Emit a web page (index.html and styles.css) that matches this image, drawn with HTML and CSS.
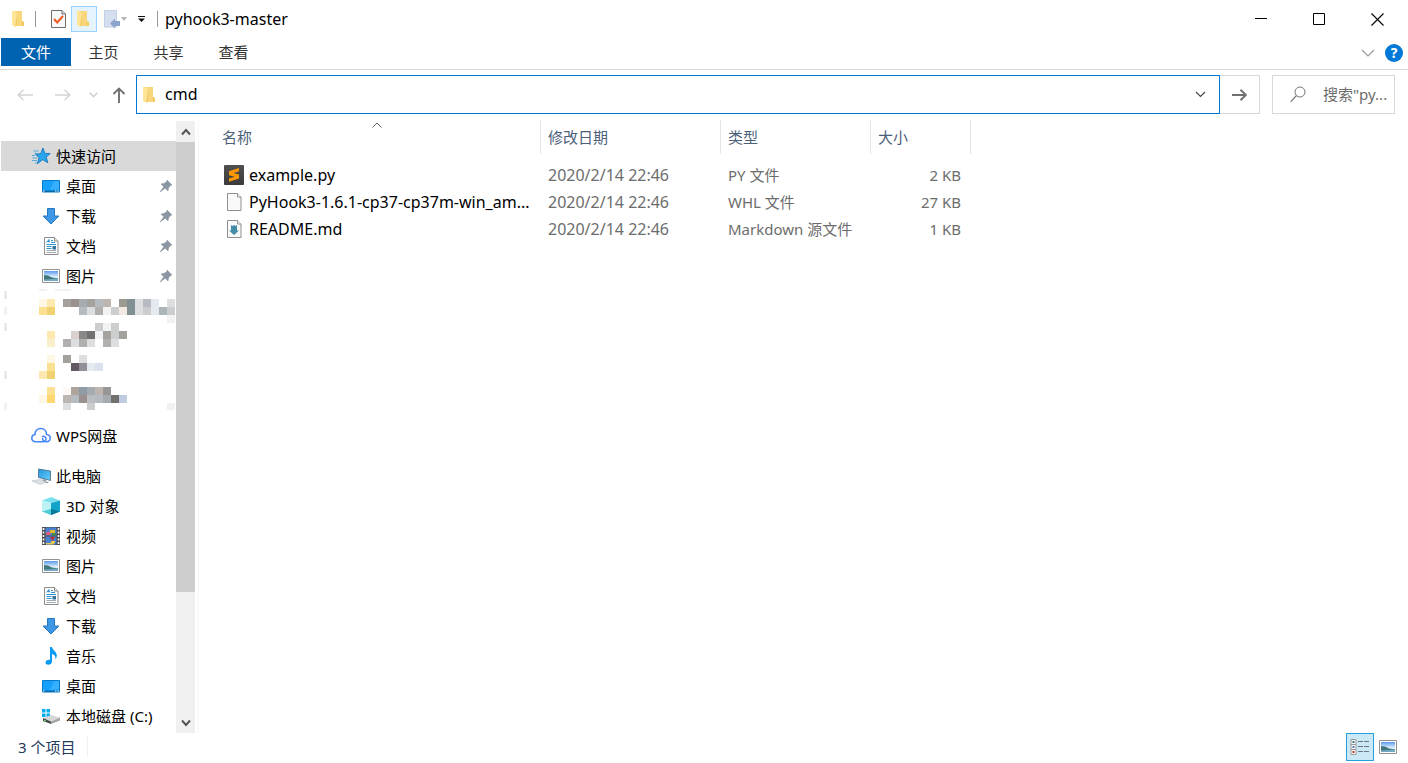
FILE: index.html
```html
<!DOCTYPE html>
<html lang="zh-CN">
<head>
<meta charset="utf-8">
<title>pyhook3-master</title>
<link rel="stylesheet" href="styles.css">
</head>
<body>
<svg class="sprite" width="0" height="0" aria-hidden="true">
  <defs>
    <linearGradient id="g-sky" x1="0" y1="0" x2="0" y2="1"><stop offset="0" stop-color="#5b9bef"/><stop offset=".6" stop-color="#e4f1fb"/><stop offset="1" stop-color="#cfe6f5"/></linearGradient>
    <linearGradient id="g-screen" x1="0" y1="0" x2="1" y2="1"><stop offset="0" stop-color="#1f97e0"/><stop offset="1" stop-color="#6ccbfa"/></linearGradient>
    <linearGradient id="g-dark" x1="0" y1="0" x2="0" y2="1"><stop offset="0" stop-color="#505050"/><stop offset="1" stop-color="#3a3a3a"/></linearGradient>
  </defs>
  <symbol id="i-folder" viewBox="0 0 20 20">
    <path d="M3 2h10v10l2 1v4H6z" fill="#f8d67c"/>
    <path d="M13 12l2 1v4h-2z" fill="#f3c95f"/>
    <path d="M3 2h2l3 2.500V16l-1.500 2L3 16z" fill="#ffe596"/>
    <path d="M8 4.500V16l-1.500 2v-3z" fill="#eec866"/>
  </symbol>
  <symbol id="i-star" viewBox="0 0 20 20">
    <path d="M12 2l1.800 5.400 5.400.1-4 3.700 1.700 5.500-5.300-3-5.200 4 1.700-6-3.700-3.600 5.200-.4z" fill="#2ba4ee" stroke="#1478bd" stroke-width=".9"/>
    <path d="M2.500 5h5M3.500 7.200h2M1 9.500h3M1.500 12h5M1 14.500h5M4 17h2" stroke="#4aa6dd" stroke-width=".9"/>
  </symbol>
  <symbol id="i-desktop" viewBox="0 0 20 20">
    <path d="M1.500 4.500h17v11.500h-17z" fill="#14a0fb" stroke="#0a79c8"/>
    <path d="M13 5h5v8l-9 1z" fill="#45b6ff" opacity=".7"/>
    <path d="M2 14.500h16v1.500H2z" fill="#0869ad"/>
    <path d="M2 15h1.500M14 15h1.500M16.500 15H18" stroke="#fff"/>
  </symbol>
  <symbol id="i-download" viewBox="0 0 20 20"><path d="M6.500 2.500h7V10H18l-8 8-8-8h4.500z" fill="#3d97e4" stroke="#2878bd"/></symbol>
  <symbol id="i-doc" viewBox="0 0 20 20">
    <path d="M3.500 1.500h10l3.500 3.500v13.500H3.500z" fill="#fff" stroke="#8c8c8c"/>
    <path d="M13.500 1.500V5H17" fill="#eee" stroke="#8c8c8c"/>
    <path d="M5.500 6.500L8 3.500v3M6.500 5.500h2" stroke="#2485c9" fill="none"/>
    <path d="M10 4.500h2M10 6.500h4M5.500 8.500h9.500M5.500 10.500h5M5.500 12.500h5" stroke="#2f94d3"/>
    <path d="M5.500 14.500h9.500M5.500 16.500h9.500" stroke="#a5abb0"/>
    <path d="M11.500 10h3.500v3.500h-3.500z" fill="#31739d"/>
  </symbol>
  <symbol id="i-picture" viewBox="0 0 20 20">
    <path d="M1.500 3.500h17v13h-17z" fill="#fff" stroke="#929292"/>
    <path d="M3 5h14v10H3z" fill="url(#g-sky)"/>
    <path d="M3 9l4 .5 4 2 6 .8V15H3z" fill="#42787a"/>
    <path d="M3 13.500l8-.6 6-.6V15H3z" fill="#75a9c4"/>
  </symbol>
  <symbol id="i-pin" viewBox="0 0 16 16">
    <path d="M9 2l5 5-1.500.5L10.500 10l-.5 3-2.800-2.800L2 14l3.800-5.200L3 6l3-.5L9 3.500z" fill="#8a97a3" stroke="#8a97a3" stroke-width=".6"/>
  </symbol>
  <symbol id="i-cloud" viewBox="0 0 20 20">
    <path d="M15.500 8.500c2.400.2 3.700 1.500 3.700 3.600 0 2.200-1.500 3.700-3.700 3.700-2.300 0-3.800-1.600-3.800-3.300M15.500 8.500C15.500 4.700 13 2.500 9.800 2.500 6.400 2.500 4 4.700 4 8.400c-1.900.2-3.200 1.700-3.200 3.700 0 2.300 1.600 3.700 4.200 3.700h6.500c2.200 0 3.500-1.200 3.500-3 0-1.700-1.700-2.800-3.500-2.300" fill="none" stroke="#4285f4" stroke-width="1.500" stroke-linecap="round"/>
  </symbol>
  <symbol id="i-pc" viewBox="0 0 20 20">
    <path d="M7.500 3l12 2v9.500l-12-3z" fill="url(#g-screen)" stroke="#47667b" stroke-width=".8"/>
    <path d="M12 13l3 .8v1.700l3 .7-1.500 1-5-1.200z" fill="#8d999f"/>
    <path d="M1 15l8-1.500 6 2.500-6 2.500z" fill="#dfe2e4" stroke="#b6bdc2" stroke-width=".6"/>
  </symbol>
  <symbol id="i-cube" viewBox="0 0 20 20">
    <path d="M1 4.500L10 1l9 3.500L10 7z" fill="#7be0ed"/>
    <path d="M1 4.500L10 7v12L1 15.500z" fill="#baf2f5"/>
    <path d="M10 7l9-2.500v11L10 19z" fill="#13a3c9"/>
    <path d="M1 15.500l9-2.500v6z" fill="#4ecbd8"/>
    <path d="M10 13l9 2.500L10 19z" fill="#087a99"/>
  </symbol>
  <symbol id="i-video" viewBox="0 0 20 20">
    <path d="M1 1h18v18H1z" fill="#4d4d4d"/>
    <path d="M2.500 2v16M17.500 2v16" stroke="#fff" stroke-width="1.600" stroke-dasharray="2 1.500"/>
    <path d="M4.500 1.500h11v8h-11zM4.500 10.500h11v8h-11z" fill="#4a80d2"/>
    <path d="M5 7l3-2 2 4H5z" fill="#e95f78"/><path d="M9 4h5v3H9z" fill="#e5b833"/><path d="M11 7h4v2.500h-4z" fill="#438a47"/>
    <path d="M9 11h5l-2.500 4z" fill="#bd2d2d"/><path d="M10 15h4v2h-4z" fill="#edc84c"/><path d="M5 17h8v1.500H5z" fill="#e0ca5a"/>
  </symbol>
  <symbol id="i-music" viewBox="0 0 20 20">
    <path d="M9 1h2c.3 3 4.800 4.500 4.800 8.500 0 1.700-.6 2.800-1.600 4 .8-3-.5-4.600-3.200-5.500v7.500c0 2-1.600 3.300-3.600 3.300S4.500 17.800 4.500 16.500c0-1.700 2-3 4.500-2.600z" fill="#0a9cf2"/>
  </symbol>
  <symbol id="i-disk" viewBox="0 0 20 20">
    <path d="M1 3h3.500v3.500H1zM5.500 3H9v3.500H5.500zM1 7.500h3.500V11H1zM5.500 7.500H9V11H5.500z" fill="#00adef"/>
    <path d="M2 12l8-3 9 2.500-9 4z" fill="#d6d8d8"/>
    <path d="M2 12l8 3.500V18l-8-3z" fill="#474a4b"/>
    <path d="M10 15.500l9-4v3L10 18z" fill="#a2a5a6"/>
    <path d="M3 14.500h2" stroke="#62d54e"/>
  </symbol>
  <symbol id="i-sublime" viewBox="0 0 20 20">
    <rect width="20" height="20" rx="1" fill="url(#g-dark)"/>
    <path d="M5 6.300L15 3v3.200L9.500 8l5.500 1.600v3.900L5 16.800v-3.200l5.600-1.800L5 10.200z" fill="#ff9800"/>
  </symbol>
  <symbol id="i-file" viewBox="0 0 20 20">
    <path d="M3.500 1.500h10l3.500 3.500v13.500H3.500z" fill="#f9f9f9" stroke="#8f8f8f"/><path d="M13.500 1.500V5H17" fill="#fff" stroke="#8f8f8f"/>
  </symbol>
  <symbol id="i-md" viewBox="0 0 20 20">
    <use href="#i-file"/><path d="M7 6l1.500 1L10 6l1.500 1L13 6v5.500h2L10 16l-5-4.500h2z" fill="#438ba9"/>
  </symbol>
  <symbol id="i-check" viewBox="0 0 20 20">
    <path d="M3.500 1.500H14l3.500 3.500v13.500h-14z" fill="#f6f8fa" stroke="#6c6c6c"/><path d="M14 1.500V5h3.500" fill="#ddd" stroke="#6c6c6c"/>
    <path d="M6 10l3.200 3.500L15 7" fill="none" stroke="#f2571e" stroke-width="2"/>
  </symbol>
  <symbol id="i-undo" viewBox="0 0 20 20">
    <path d="M3.500 1.500h12v16.500h-12z" fill="#d5dfef" stroke="#c3d0e4"/><path d="M9 14.500l5-5V12h5v5h-5v2.500z" fill="#8aa4cb"/>
  </symbol>
</svg>

<div class="window">
  <header class="titlebar">
    <svg class="icon" aria-hidden="true"><use href="#i-folder"/></svg>
    <span class="divider"></span>
    <div class="quick">
      <button class="quick-btn" aria-label="属性"><svg class="icon"><use href="#i-check"/></svg></button>
      <button class="quick-btn hot" aria-label="新建文件夹"><svg class="icon"><use href="#i-folder"/></svg></button>
      <button class="quick-btn undo" aria-label="撤消"><svg class="icon"><use href="#i-undo"/></svg><svg width="6" height="4" viewBox="0 0 6 4"><path d="M0 0h6L3 4z" fill="#b5b5b5"/></svg></button>
      <button class="quick-btn more" aria-label="自定义快速访问工具栏"><svg width="7" height="6" viewBox="0 0 7 6"><path d="M0 0h7v1H0zM0 2.500h7L3.500 6z" fill="#111"/></svg></button>
    </div>
    <span class="divider"></span>
    <h1 class="title">pyhook3-master</h1>
    <div class="caption">
      <button class="caption-btn" aria-label="最小化"><svg width="13" height="13"><path d="M0 5.500h12" stroke="#000"/></svg></button>
      <button class="caption-btn" aria-label="最大化"><svg width="13" height="13"><path d="M.5.5h11v11H.5z" fill="none" stroke="#000"/></svg></button>
      <button class="caption-btn" aria-label="关闭"><svg width="13" height="13"><path d="M.5.5l12 12M12.500.5l-12 12" stroke="#000" stroke-width="1.100"/></svg></button>
    </div>
  </header>

  <nav class="ribbon">
    <button class="tab file">文件</button>
    <button class="tab">主页</button>
    <button class="tab">共享</button>
    <button class="tab">查看</button>
    <div class="ribbon-end">
      <button class="plain" aria-label="展开功能区"><svg width="14" height="8"><path d="M1 1l6 6 6-6" fill="none" stroke="#999" stroke-width="1.200"/></svg></button>
      <button class="help" aria-label="帮助">?</button>
    </div>
  </nav>

  <div class="addressbar">
    <div class="history">
      <button class="plain" aria-label="后退"><svg width="16" height="12"><path d="M16 6H1M6.500.8L1.200 6l5.300 5.200" fill="none" stroke="#d5d5d5" stroke-width="1.500"/></svg></button>
      <button class="plain" aria-label="前进"><svg width="16" height="12"><path d="M0 6h15M9.500.8L14.800 6l-5.300 5.200" fill="none" stroke="#d5d5d5" stroke-width="1.500"/></svg></button>
      <button class="plain" aria-label="最近浏览的位置"><svg width="9" height="6"><path d="M.7.7l3.800 4L8.300.7" fill="none" stroke="#ccc" stroke-width="1.300"/></svg></button>
      <button class="plain" aria-label="上移"><svg width="14" height="16"><path d="M7 16V1.500M1.500 7L7 1.500 12.500 7" fill="none" stroke="#707070" stroke-width="1.900"/></svg></button>
    </div>
    <div class="address">
      <svg class="icon" aria-hidden="true"><use href="#i-folder"/></svg>
      <input class="address-input" type="text" value="cmd" aria-label="地址">
      <button class="plain" aria-label="以前的位置"><svg width="11" height="7"><path d="M1 1l4.500 4.500L10 1" fill="none" stroke="#444" stroke-width="1.200"/></svg></button>
    </div>
    <button class="go" aria-label="转到"><svg width="15" height="12"><path d="M0 6h14M8.500.8L14 6l-5.500 5.200" fill="none" stroke="#707070" stroke-width="1.900"/></svg></button>
    <label class="search">
      <svg width="16" height="17" aria-hidden="true"><circle cx="10" cy="6" r="5" fill="none" stroke="#777"/><path d="M6.500 9.500L.7 15.800" stroke="#777" stroke-width="1.200"/></svg>
      <input class="search-input" type="text" placeholder="搜索&quot;py..." aria-label="搜索">
    </label>
  </div>

  <main class="body">
    <aside class="sidebar">
      <div class="tree">
        <a class="node root current" href="#"><svg class="icon"><use href="#i-star"/></svg>快速访问</a>
        <a class="node" href="#"><svg class="icon"><use href="#i-desktop"/></svg>桌面<svg class="pin"><use href="#i-pin"/></svg></a>
        <a class="node" href="#"><svg class="icon"><use href="#i-download"/></svg>下载<svg class="pin"><use href="#i-pin"/></svg></a>
        <a class="node" href="#"><svg class="icon"><use href="#i-doc"/></svg>文档<svg class="pin"><use href="#i-pin"/></svg></a>
        <a class="node" href="#"><svg class="icon"><use href="#i-picture"/></svg>图片<svg class="pin"><use href="#i-pin"/></svg></a>
        <svg class="mosaic" viewBox="0 291 176 120" shape-rendering="crispEdges" aria-hidden="true">
          <path d="M4 291h3v8h-3zM4 323h3v8h-3zM4 371h3v8h-3z" fill="#e9e9e9"/>
          <path d="M4 307h3v8h-3zM4 403h3v7h-3zM39 289h8v2h-8zM55 289h16v2h-16zM167 315h8v8h-8zM167 403h8v7h-8z" fill="#f2f2f2"/>
          <path d="M39 299h8v8h-8zM47 355h8v8h-8zM39 395h8v8h-8z" fill="#fff7e4"/>
          <path d="M47 299h8v8h-8zM47 331h8v8h-8zM39 371h8v8h-8z" fill="#fde9b0"/>
          <path d="M47 339h8v8h-8z" fill="#faefcc"/>
          <path d="M39 307h8v8h-8zM47 363h8v8h-8zM47 387h8v8h-8z" fill="#fce092"/>
          <path d="M47 307h8v8h-8zM47 371h8v8h-8z" fill="#f1d273"/>
          <path d="M47 395h8v8h-8z" fill="#ffd872"/>
          <path d="M63 299h8v8h-8zM87 299h8v8h-8zM103 331h8v8h-8zM63 355h8v8h-8zM119 331h8v8h-8z" fill="#a5a19c"/>
          <path d="M71 299h8v8h-8zM79 395h8v8h-8z" fill="#9b908e"/>
          <path d="M79 299h8v8h-8zM87 387h8v8h-8zM103 395h8v8h-8z" fill="#a6abb0"/>
          <path d="M79 307h8v8h-8zM95 299h8v8h-8zM143 299h8v8h-8zM71 395h8v8h-8zM95 395h8v8h-8z" fill="#b5bbc0"/>
          <path d="M103 299h8v8h-8zM95 387h8v8h-8zM63 395h8v8h-8z" fill="#bdb5b0"/>
          <path d="M119 299h8v8h-8z" fill="#9c9a90"/>
          <path d="M127 299h8v8h-8zM127 307h8v8h-8z" fill="#829096"/>
          <path d="M135 299h8v8h-8zM87 307h8v8h-8zM135 307h8v8h-8zM167 299h8v8h-8zM71 339h8v8h-8zM87 339h8v8h-8zM111 339h8v8h-8zM79 355h8v8h-8zM63 403h8v7h-8z" fill="#dcdedf"/>
          <path d="M151 299h8v8h-8zM151 307h8v8h-8zM87 363h8v8h-8z" fill="#e4eaf0"/>
          <path d="M95 307h8v8h-8zM63 339h8v8h-8zM79 339h8v8h-8zM103 339h8v8h-8z" fill="#b1b0af"/>
          <path d="M103 307h8v8h-8zM103 323h8v8h-8zM95 331h8v8h-8z" fill="#f0f2f3"/>
          <path d="M111 307h8v8h-8zM143 307h8v8h-8zM167 307h8v8h-8zM95 323h8v8h-8zM111 323h8v8h-8zM111 331h8v8h-8zM87 403h8v7h-8z" fill="#cbcdcf"/>
          <path d="M119 307h8v8h-8z" fill="#f2e9e2"/>
          <path d="M159 307h8v8h-8z" fill="#a9b5b6"/>
          <path d="M71 331h8v8h-8z" fill="#dcd0cf"/>
          <path d="M79 331h8v8h-8z" fill="#898987"/>
          <path d="M87 331h8v8h-8zM111 395h8v8h-8z" fill="#737170"/>
          <path d="M71 363h8v8h-8z" fill="#625a60"/>
          <path d="M79 363h8v8h-8z" fill="#938f9a"/>
          <path d="M95 363h8v8h-8z" fill="#d8e2ee"/>
          <path d="M71 387h8v8h-8z" fill="#ada599"/>
          <path d="M79 387h8v8h-8z" fill="#8f9ba5"/>
          <path d="M103 387h8v8h-8z" fill="#989797"/>
          <path d="M87 395h8v8h-8z" fill="#babdc1"/>
          <path d="M119 395h8v8h-8z" fill="#c0cbe0"/>
          <path d="M63 387h8v8h-8z" fill="#fdf8f5"/>
        </svg>
        <a class="node root spaced" href="#"><svg class="icon"><use href="#i-cloud"/></svg>WPS网盘</a>
        <a class="node root spaced" href="#"><svg class="icon"><use href="#i-pc"/></svg>此电脑</a>
        <a class="node" href="#"><svg class="icon"><use href="#i-cube"/></svg>3D 对象</a>
        <a class="node" href="#"><svg class="icon"><use href="#i-video"/></svg>视频</a>
        <a class="node" href="#"><svg class="icon"><use href="#i-picture"/></svg>图片</a>
        <a class="node" href="#"><svg class="icon"><use href="#i-doc"/></svg>文档</a>
        <a class="node" href="#"><svg class="icon"><use href="#i-download"/></svg>下载</a>
        <a class="node" href="#"><svg class="icon"><use href="#i-music"/></svg>音乐</a>
        <a class="node" href="#"><svg class="icon"><use href="#i-desktop"/></svg>桌面</a>
        <a class="node" href="#"><svg class="icon"><use href="#i-disk"/></svg>本地磁盘 (C:)</a>
      </div>
      <div class="scrollbar">
        <button class="scroll-btn" aria-label="向上滚动"><svg width="10" height="8"><path d="M1 6.500L5 2l4 4.500" fill="none" stroke="#555" stroke-width="2"/></svg></button>
        <div class="track"><div class="thumb"></div></div>
        <button class="scroll-btn" aria-label="向下滚动"><svg width="10" height="8"><path d="M1 1.500L5 6l4-4.500" fill="none" stroke="#555" stroke-width="2"/></svg></button>
      </div>
    </aside>

    <section class="content">
      <table class="files">
        <colgroup><col class="c-name"><col class="c-date"><col class="c-type"><col class="c-size"></colgroup>
        <thead>
          <tr>
            <th>名称<svg class="sort" width="10" height="6"><path d="M.5 5.500L5 1l4.500 4.500" fill="none" stroke="#666"/></svg></th>
            <th>修改日期</th><th>类型</th><th>大小</th>
          </tr>
        </thead>
        <tbody>
          <tr><td><div class="file-name"><svg class="icon"><use href="#i-sublime"/></svg><span>example.py</span></div></td><td class="date">2020/2/14 22:46</td><td>PY 文件</td><td>2 KB</td></tr>
          <tr><td><div class="file-name"><svg class="icon"><use href="#i-file"/></svg><span>PyHook3-1.6.1-cp37-cp37m-win_am...</span></div></td><td class="date">2020/2/14 22:46</td><td>WHL 文件</td><td>27 KB</td></tr>
          <tr><td><div class="file-name"><svg class="icon"><use href="#i-md"/></svg><span>README.md</span></div></td><td class="date">2020/2/14 22:46</td><td>Markdown 源文件</td><td>1 KB</td></tr>
        </tbody>
      </table>
    </section>
  </main>

  <footer class="status">
    <span class="count">3 个项目</span>
    <div class="views">
      <button class="view active" aria-label="详细信息"><svg width="20" height="18" viewBox="0 0 20 18"><path d="M1 1.500h5v15H1zM1 6.500h5M1 11.500h5" fill="#fff" stroke="#999"/><path d="M2.500 3h2v2h-2z" fill="#39777e"/><path d="M2.500 8h2v2h-2z" fill="#527bb7"/><path d="M2.500 13h2v2h-2z" fill="#bd3223"/><path d="M8 3.500h5M14 3.500h5M8 8.500h5M14 8.500h5M8 13.500h5M14 13.500h5" stroke="#6b7780"/></svg></button>
      <button class="view" aria-label="大图标"><svg class="icon"><use href="#i-picture"/></svg></button>
    </div>
  </footer>
</div>
</body>
</html>
```

FILE: styles.css
```css
* { box-sizing: border-box; }

body {
  margin: 0;
  background: #fff;
  color: #000;
  font-family: "Noto Sans", "Noto Sans CJK SC", sans-serif;
  font-size: 15px;
  line-height: 20px;
}

button {
  display: flex;
  align-items: center;
  justify-content: center;
  margin: 0;
  padding: 0;
  border: 0;
  background: none;
  color: inherit;
  font: inherit;
}

input {
  min-width: 0;
  flex: 1;
  padding: 0;
  border: 0;
  outline: 0;
  background: none;
  color: inherit;
  font: inherit;
}

svg { display: block; flex: none; }

.sprite { position: absolute; }
.icon { width: 20px; height: 20px; }

.window {
  display: flex;
  flex-direction: column;
  min-height: 100vh;
}

/* Title bar */
.titlebar {
  display: flex;
  align-items: center;
  height: 38px;
  padding-left: 9px;
}

.divider { width: 1px; height: 16px; margin: 0 6px; background: #999; }
.quick { display: flex; align-items: center; height: 28px; padding-left: 3px; }
.quick-btn { width: 26px; height: 26px; }
.quick-btn.hot { border: 1px solid #99d1ff; background: #e5f3ff; }
.quick-btn.undo { width: 34px; }
.quick-btn.more { width: 20px; }
.title { margin: 0; padding-left: 1px; font-size: 16px; font-weight: 400; }
.caption { display: flex; margin-left: auto; padding-right: 2px; }
.caption-btn { width: 58px; height: 38px; }

/* Ribbon tabs */
.ribbon {
  display: flex;
  height: 32px;
  padding: 0 5px 3px 1px;
  border-bottom: 1px solid #dadbdc;
}

.tab { width: 65px; color: #333; }
.tab.file { width: 70px; background: #0063b1; color: #fff; }
.ribbon-end { display: flex; align-items: center; gap: 10px; margin-left: auto; padding-top: 2px; }

.help {
  width: 18px;
  height: 18px;
  border-radius: 50%;
  background: #0078d7;
  color: #fff;
  font-size: 14px;
  font-weight: 700;
}

/* Address bar */
.addressbar {
  display: flex;
  height: 50px;
  padding: 5px 13px 6px 17px;
}

.history { display: flex; align-items: center; width: 119px; }
.history .plain { margin-right: 22px; }
.history .plain:nth-child(2) { margin-right: 18px; }
.history .plain:nth-child(3) { margin-right: 14px; }
.history .plain:last-child { margin-right: 0; }

.address {
  display: flex;
  align-items: center;
  flex: 1;
  gap: 5px;
  padding: 0 13px 0 3px;
  border: 1px solid #0078d7;
}

.address-input { padding-bottom: 2px; font-size: 16px; }
.go { width: 40px; border: 1px solid #d9d9d9; border-left: 0; }

.search {
  display: flex;
  align-items: center;
  width: 123px;
  margin-left: 12px;
  padding-left: 17px;
  gap: 17px;
  border: 1px solid #d9d9d9;
}

.search-input { padding-bottom: 2px; }
.search-input::placeholder { color: #6d6d6d; opacity: 1; }

/* Navigation pane */
.body { display: flex; flex: 1; }

.sidebar {
  display: flex;
  width: 199px;
  padding: 1px 3px 0 0;
  border-right: 1px solid #f6f6f6;
}

.tree { flex: 1; padding: 20px 0 2px 1px; }

.node {
  display: flex;
  align-items: center;
  gap: 5px;
  height: 30px;
  padding-left: 40px;
  padding-right: 2px;
  color: inherit;
  text-decoration: none;
  white-space: nowrap;
}

.node.root { padding-left: 30px; }
.node.current { background: #d9d9d9; }
.node.spaced { margin-top: 10px; }
.pin { width: 16px; height: 16px; margin-left: auto; }
.mosaic { width: 176px; height: 120px; margin-left: -1px; overflow: visible; }

.scrollbar {
  display: flex;
  flex-direction: column;
  width: 20px;
  background: #f0f0f0;
}

.scroll-btn { height: 21px; }
.track { flex: 1; }
.thumb { width: 19px; height: 79%; margin-left: auto; background: #cdcdcd; }

/* File list */
.content { flex: 1; padding: 0 0 0 15px; }

.files {
  width: 757px;
  border-collapse: separate;
  border-spacing: 0;
  table-layout: fixed;
}

.c-name { width: 327px; }
.c-date { width: 180px; }
.c-type { width: 150px; }
.c-size { width: 100px; }

.files th {
  position: relative;
  height: 34px;
  padding: 0 7px;
  border-right: 1px solid #e5e5e5;
  color: #4c607a;
  font-weight: 400;
  text-align: left;
}

.files th:first-child { padding-left: 8px; }
.sort { position: absolute; top: 2px; left: calc(50% - 5px); }
.files tbody::before { content: ""; display: block; height: 7px; }

.files td {
  height: 27px;
  padding: 0 7px;
  color: #6d6d6d;
  white-space: nowrap;
}

.files td:first-child { color: #000; }
.files td:last-child { padding-right: 10px; text-align: right; }
.files .date { font-size: 16px; }
.file-name { display: flex; align-items: center; gap: 5px; padding-left: 3px; font-size: 16px; }

/* Status bar */
.status {
  display: flex;
  align-items: center;
  height: 30px;
  padding: 0 6px 2px 18px;
  color: #1e395b;
}

.count { padding-right: 12px; border-right: 1px solid #f0f0f0; }
.views { display: flex; margin-left: auto; }
.view { width: 28px; height: 28px; }
.view.active { border: 1px solid #26a0da; background: #cbe8f6; }
```
